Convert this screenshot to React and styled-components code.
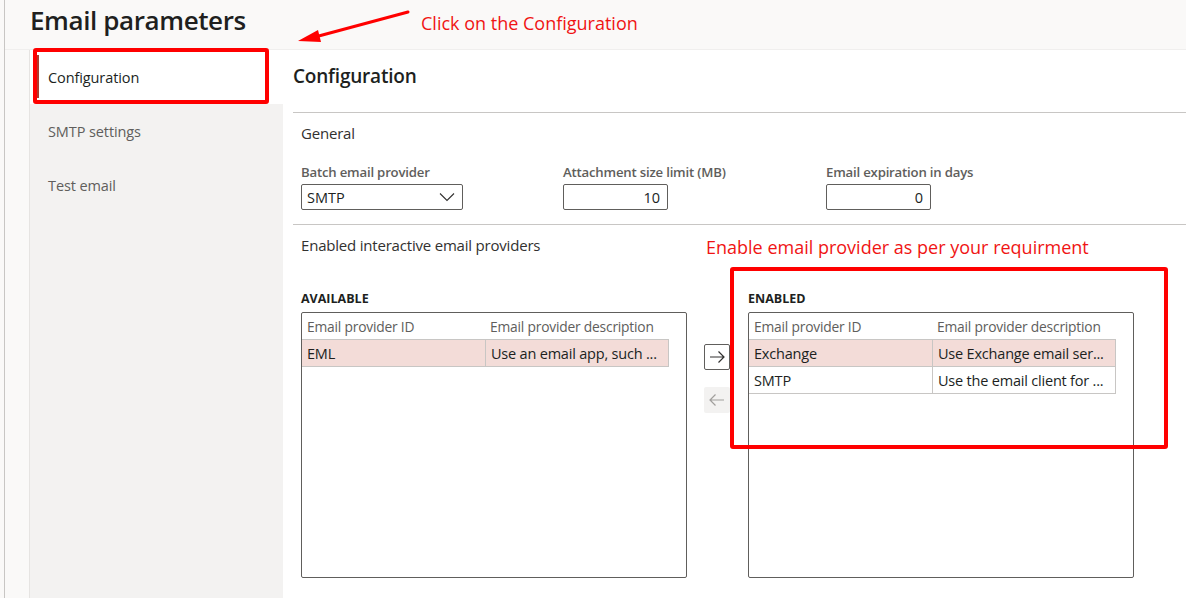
import React from "react";
import styled, { createGlobalStyle } from "styled-components";

const Global = createGlobalStyle`
  html, body { margin: 0; padding: 0; }
  body {
    font-family: "Open Sans", "Noto Sans", sans-serif;
    color: #201f1e;
    background: #faf9f8;
  }
  * { box-sizing: border-box; }
`;

const Page = styled.div`
  position: relative;
  height: 598px;
  margin-left: 4px;
  border-left: 1px solid #c8c6c4;
  background: #faf9f8;
  overflow: hidden;
  display: flex;
  flex-direction: column;
`;

const Header = styled.header`
  height: 50px;
  padding-left: 25px;
  border-bottom: 1px solid #f0efee;
`;

const Title = styled.h1`
  margin: 0;
  font-size: 26px;
  font-weight: 600;
  line-height: 41px;
  letter-spacing: -0.4px;
  color: #201f1e;
`;

const Body = styled.div`
  flex: 1;
  display: flex;
  padding-left: 24px;
`;

const Sidebar = styled.nav`
  width: 254px;
  background: #f3f2f1;
  border-left: 1px solid #e6e4e2;
`;

const NavItem = styled.div`
  position: relative;
  height: 54px;
  display: flex;
  align-items: center;
  padding-left: 18px;
  font-size: 14.5px;
  letter-spacing: -0.1px;
  color: ${(p) => (p.$active ? "#201f1e" : "#605e5c")};
  background: ${(p) => (p.$active ? "#ffffff" : "transparent")};

  &::before {
    content: "";
    display: ${(p) => (p.$active ? "block" : "none")};
    position: absolute;
    left: 6px;
    top: 5px;
    bottom: 6px;
    width: 3px;
    background: #b03a2e;
  }
`;

const Main = styled.main`
  flex: 1;
  background: #ffffff;
  padding-left: 10px;
`;

const PageHeading = styled.h2`
  margin: 0;
  padding: 14px 0 24px;
  font-size: 19px;
  font-weight: 600;
  line-height: 24px;
  letter-spacing: -0.2px;
  color: #201f1e;
  border-bottom: 1px solid #c8c6c4;
`;

const Section = styled.section`
  padding: 10px 0 ${(p) => p.$bottom || 0}px 8px;
  border-bottom: ${(p) => (p.$divider ? "1px solid #c8c6c4" : "none")};
`;

const SectionTitle = styled.div`
  font-size: 15px;
  line-height: 20px;
  letter-spacing: -0.2px;
  color: #323130;
`;

const FieldRow = styled.div`
  display: grid;
  grid-template-columns: 262px 263px auto;
  margin-top: 20px;
`;

const Field = styled.div`
  display: flex;
  flex-direction: column;
  gap: 3px;
`;

const Label = styled.label`
  font-size: 13.2px;
  line-height: 18px;
  font-weight: 600;
  letter-spacing: -0.2px;
  color: #605e5c;
`;

const InputBox = styled.div`
  width: ${(p) => p.$w}px;
  height: 26px;
  border: 1px solid #605e5c;
  border-radius: 2px;
  display: flex;
  align-items: center;
  justify-content: ${(p) => (p.$right ? "flex-end" : "space-between")};
  padding: 0 7px 0 5px;
  font-size: 14.5px;
  color: #201f1e;
`;

const Transfer = styled.div`
  display: flex;
  margin-top: 36px;
`;

const ListColumn = styled.div`
  width: 386px;
  display: flex;
  flex-direction: column;
  gap: 5px;
`;

const ListTitle = styled.div`
  font-size: 12.5px;
  font-weight: 700;
  line-height: 16px;
  color: #201f1e;
`;

const ListBox = styled.div`
  height: 266px;
  border: 1px solid #605e5c;
  border-radius: 2px;
`;

const Grid = styled.div`
  display: grid;
  grid-template-columns: 183px 184px;
  width: 367px;
`;

const HeadCell = styled.div`
  height: 26px;
  display: flex;
  align-items: center;
  padding-left: 5px;
  font-size: 13.8px;
  letter-spacing: -0.2px;
  color: #605e5c;
`;

const Cell = styled.div`
  height: ${(p) => (p.$first ? 28 : 27)}px;
  display: flex;
  align-items: center;
  padding-left: 5px;
  font-size: 14.5px;
  letter-spacing: -0.2px;
  white-space: nowrap;
  overflow: hidden;
  color: #201f1e;
  background: ${(p) => (p.$selected ? "#f3dcd8" : "#ffffff")};
  border-top: ${(p) => (p.$first ? "1px solid #c8c6c4" : "none")};
  border-bottom: 1px solid #c8c6c4;
  border-left: ${(p) => (p.$left ? "none" : "1px solid #c8c6c4")};
  border-right: ${(p) => (p.$left ? "none" : "1px solid #c8c6c4")};
`;

const Buttons = styled.div`
  width: 61px;
  padding: 53px 0 0 17px;
  display: flex;
  flex-direction: column;
  gap: 17px;
`;

const MoveButton = styled.button`
  width: 26px;
  height: 26px;
  padding: 0;
  display: flex;
  align-items: center;
  justify-content: center;
  border: ${(p) => (p.disabled ? "none" : "1px solid #605e5c")};
  border-radius: 2px;
  background: ${(p) => (p.disabled ? "#f3f2f1" : "#ffffff")};
  color: ${(p) => (p.disabled ? "#a19f9d" : "#323130")};
`;

const Mark = styled.div`
  position: absolute;
  left: ${(p) => p.$x}px;
  top: ${(p) => p.$y}px;
  width: ${(p) => p.$w}px;
  height: ${(p) => p.$h}px;
  border: 4px solid #ff0000;
  border-radius: 3px;
  pointer-events: none;
`;

const Note = styled.div`
  position: absolute;
  left: ${(p) => p.$x}px;
  top: ${(p) => p.$y}px;
  font-size: 18px;
  line-height: 22px;
  color: #f01414;
  white-space: nowrap;
`;

const Pointer = styled.svg`
  position: absolute;
  left: 0;
  top: 0;
  pointer-events: none;
`;

const Chevron = () => (
  <svg width="16" height="10" viewBox="0 0 16 10" fill="none">
    <path d="M1 1.5 L8 8.5 L15 1.5" stroke="#323130" strokeWidth="1.1" />
  </svg>
);

const Arrow = ({ dir }) => (
  <svg width="16" height="12" viewBox="0 0 16 12" fill="none" stroke="currentColor" strokeWidth="1.2">
    {dir === "right" ? (
      <path d="M1 6 H15 M9.5 0.5 L15 6 L9.5 11.5" />
    ) : (
      <path d="M15 6 H1 M6.5 0.5 L1 6 L6.5 11.5" />
    )}
  </svg>
);

const ProviderList = ({ title, rows }) => (
  <ListColumn>
    <ListTitle>{title}</ListTitle>
    <ListBox>
      <Grid>
        <HeadCell>Email provider ID</HeadCell>
        <HeadCell>Email provider description</HeadCell>
        {rows.map((r, i) => (
          <React.Fragment key={r.id}>
            <Cell $left $first={i === 0} $selected={r.selected}>{r.id}</Cell>
            <Cell $first={i === 0} $selected={r.selected}>{r.desc}</Cell>
          </React.Fragment>
        ))}
      </Grid>
    </ListBox>
  </ListColumn>
);

export default function App() {
  return (
    <>
      <Global />
      <Page>
        <Header>
          <Title>Email parameters</Title>
        </Header>
        <Body>
          <Sidebar>
            <NavItem $active>Configuration</NavItem>
            <NavItem>SMTP settings</NavItem>
            <NavItem>Test email</NavItem>
          </Sidebar>
          <Main>
            <PageHeading>Configuration</PageHeading>
            <Section $divider $bottom={14}>
              <SectionTitle>General</SectionTitle>
              <FieldRow>
                <Field>
                  <Label>Batch email provider</Label>
                  <InputBox $w={162}>
                    SMTP
                    <Chevron />
                  </InputBox>
                </Field>
                <Field>
                  <Label>Attachment size limit (MB)</Label>
                  <InputBox $w={105} $right>10</InputBox>
                </Field>
                <Field>
                  <Label>Email expiration in days</Label>
                  <InputBox $w={105} $right>0</InputBox>
                </Field>
              </FieldRow>
            </Section>
            <Section>
              <SectionTitle>Enabled interactive email providers</SectionTitle>
              <Transfer>
                <ProviderList
                  title="AVAILABLE"
                  rows={[{ id: "EML", desc: "Use an email app, such ...", selected: true }]}
                />
                <Buttons>
                  <MoveButton><Arrow dir="right" /></MoveButton>
                  <MoveButton disabled><Arrow dir="left" /></MoveButton>
                </Buttons>
                <ProviderList
                  title="ENABLED"
                  rows={[
                    { id: "Exchange", desc: "Use Exchange email ser...", selected: true },
                    { id: "SMTP", desc: "Use the email client for ..." },
                  ]}
                />
              </Transfer>
            </Section>
          </Main>
        </Body>

        <Pointer width="420" height="60" viewBox="0 0 420 60">
          <line x1="403" y1="12" x2="310" y2="37" stroke="#ff0000" strokeWidth="3" strokeLinecap="round" />
          <path d="M293 41 L313 30 L316 42 Z" fill="#ff0000" />
        </Pointer>
        <Note $x={416} $y={12}>Click on the Configuration</Note>
        <Mark $x={28} $y={48} $w={236} $h={56} />
        <Note $x={701} $y={236}>Enable email provider as per your requirment</Note>
        <Mark $x={725} $y={267} $w={438} $h={182} />
      </Page>
    </>
  );
}
